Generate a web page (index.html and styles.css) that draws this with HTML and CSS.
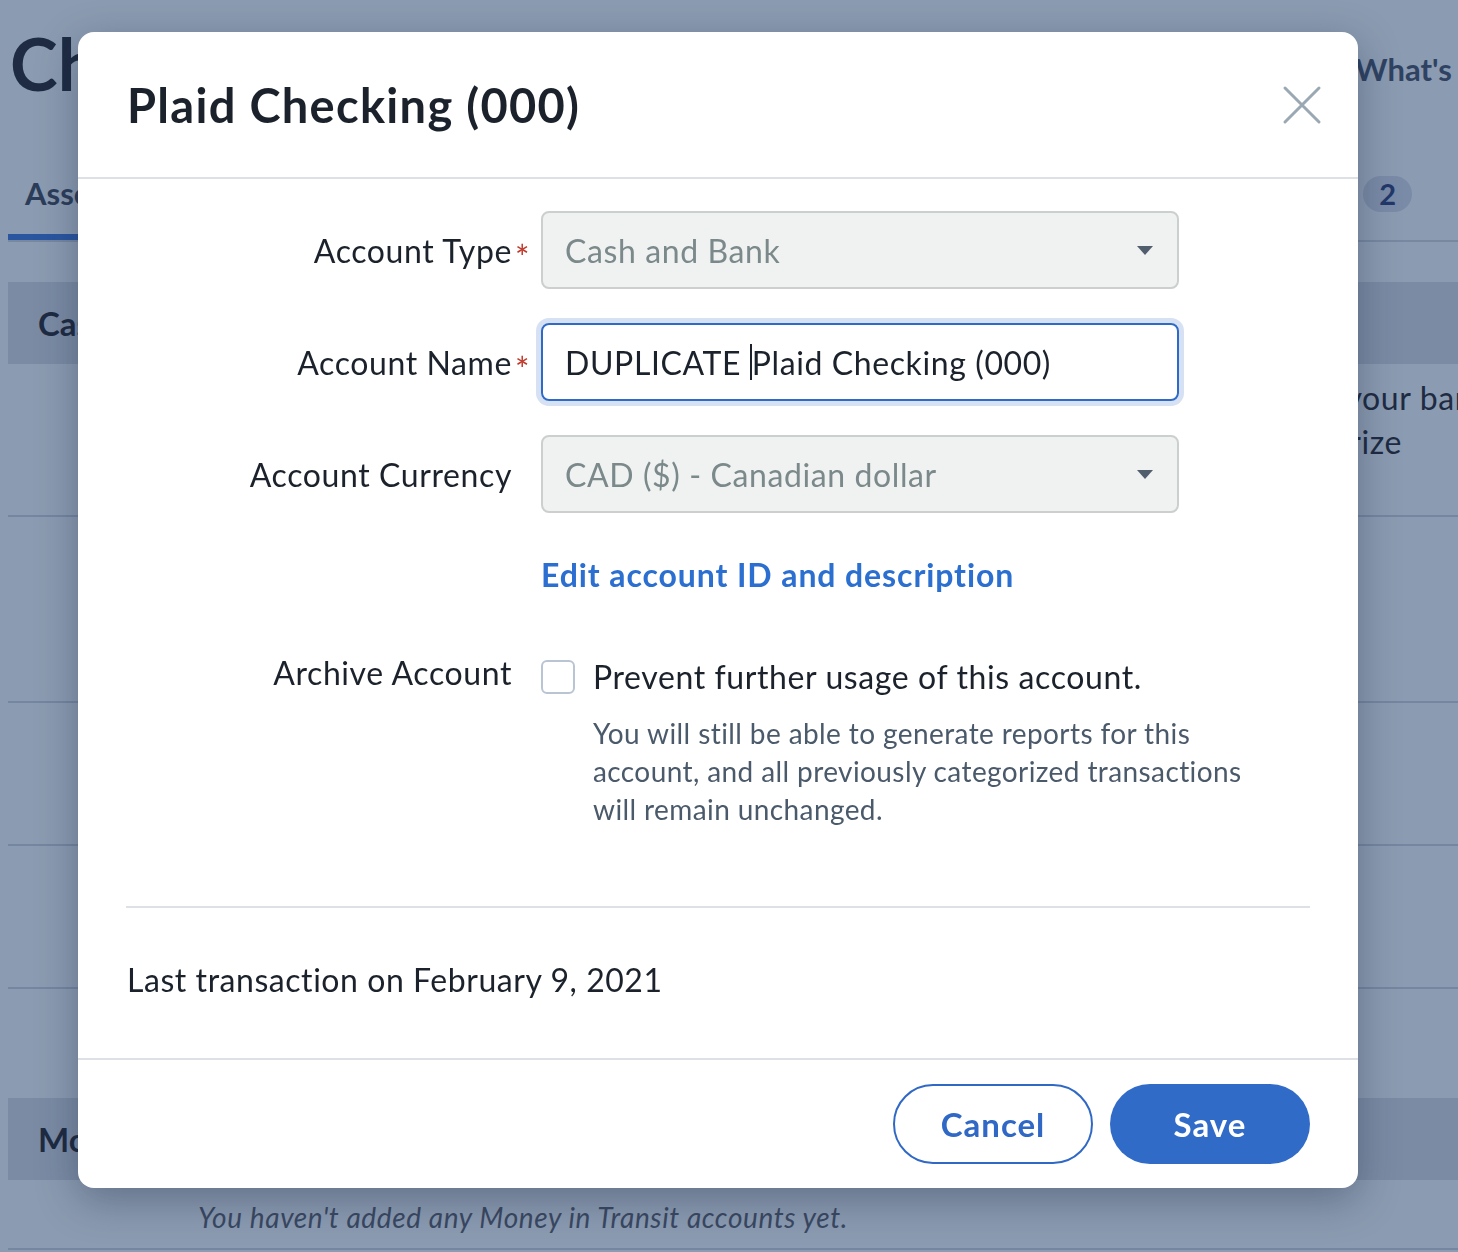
FILE: index.html
```html
<!doctype html>
<html lang="en">
  <head>
    <meta charset="UTF-8" />
    <meta name="viewport" content="width=device-width, initial-scale=1.0" />
    <title>Chart of Accounts</title>
    <link rel="stylesheet" href="styles.css">
  </head>
  <body>
    <div class="page">
      <div class="page-top">
        <h1>Chart of Accounts</h1>
        <div class="whats-new">
          <svg width="30" height="30" viewBox="0 0 30 30"><rect x="4" y="8" width="22" height="16" rx="3" fill="none" stroke="#3d4f6c" stroke-width="2.5"/></svg>
          What's new
        </div>
      </div>

      <div class="tabs">
        <div class="tab active">Assets <span class="count">5</span></div>
        <div class="tab">Liabilities &amp; Credit Cards <span class="count">3</span></div>
        <div class="tab">Income <span class="count">4</span></div>
        <div class="tab">Expenses <span class="count">26</span></div>
        <div class="tab">Equity <span class="count">2</span></div>
      </div>

      <div class="band">Cash and Bank</div>
      <div class="row tall">
        <div class="hint">
          <span class="hint-first">Connect with Plaid to import transactions from your bank</span>
          <span>automatically, and let us help you categorize</span>
        </div>
      </div>
      <div class="row taller"></div>
      <div class="row"></div>
      <div class="row"></div>
      <div class="row short"></div>
      <div class="band">Money in Transit</div>
      <div class="empty">You haven't added any Money in Transit accounts yet.</div>
    </div>

    <div class="overlay">
      <div class="modal">
        <div class="modal-header">
          <h2>Plaid Checking (000)</h2>
          <button class="close" aria-label="Close">
            <svg width="40" height="40" viewBox="0 0 40 40">
              <path d="M3 3 L37 37 M37 3 L3 37" stroke="#9aa8b3" stroke-width="3" stroke-linecap="round"/>
            </svg>
          </button>
        </div>

        <div class="modal-body">
          <div class="field">
            <label><span class="req">Account Type</span></label>
            <div class="select">
              <span>Cash and Bank</span>
              <span class="arrow"></span>
            </div>
          </div>

          <div class="field">
            <label><span class="req">Account Name</span></label>
            <div class="text-input">DUPLICATE <span class="caret"></span>Plaid Checking (000)</div>
          </div>

          <div class="field">
            <label>Account Currency</label>
            <div class="select">
              <span>CAD ($) - Canadian dollar</span>
              <span class="arrow"></span>
            </div>
          </div>

          <div class="field link-row">
            <span></span>
            <a href="#" class="edit-link">Edit account ID and description</a>
          </div>

          <div class="field archive">
            <label>Archive Account</label>
            <div class="archive-box">
              <div class="check-line">
                <span class="checkbox"></span>
                <span>Prevent further usage of this account.</span>
              </div>
              <p class="note">You will still be able to generate reports for this account, and all previously categorized transactions will remain unchanged.</p>
            </div>
          </div>

          <hr class="divider">

          <p class="last-tx">Last transaction on February 9, 2021</p>
        </div>

        <div class="modal-footer">
          <button class="btn btn-outline">Cancel</button>
          <button class="btn btn-primary">Save</button>
        </div>
      </div>
    </div>
  </body>
</html>
```

FILE: styles.css
```css
body {
  margin: 0;
  font-family: Lato, "Noto Sans", sans-serif;
  background-color: #8b9bb1;
  color: #1e2b42;
  overflow: hidden;
}

.page {
  padding: 0 0 0 8px;
  overflow: hidden;
}

.page-top {
  display: flex;
  justify-content: space-between;
  align-items: center;
  height: 126px;
}

.page-top h1 {
  margin: 0 0 0 2px;
  font-size: 72px;
  font-weight: 700;
  color: #1e2b42;
  white-space: nowrap;
}

.whats-new {
  display: flex;
  align-items: center;
  gap: 20px;
  font-size: 31px;
  font-weight: 700;
  color: #2f4262;
  margin-right: -60px;
  margin-top: 12px;
  white-space: nowrap;
}

.tabs {
  display: flex;
  gap: 20px;
  border-bottom: 2px solid #7788a1;
  height: 116px;
  box-sizing: border-box;
  margin-bottom: 40px;
  overflow: hidden;
}

.tab {
  display: flex;
  align-items: center;
  gap: 14px;
  padding: 22px 17px 0;
  font-size: 31px;
  font-weight: 700;
  color: #2c3d5a;
  height: 114px;
  box-sizing: border-box;
  white-space: nowrap;
  flex-shrink: 0;
}

.tab.active {
  border-bottom: 6px solid #2a56a0;
  width: 192px;
  padding-top: 26px;
}

.tab:last-child {
  margin-left: auto;
  margin-right: 46px;
  padding-right: 0;
}

.count {
  background-color: #7a8ba7;
  color: #22386a;
  border-radius: 18px;
  padding: 2px 16px;
  font-size: 29px;
  line-height: 32px;
}

.band {
  background-color: #7b8ba4;
  height: 82px;
  display: flex;
  align-items: center;
  padding-left: 30px;
  font-size: 33px;
  font-weight: 700;
  color: #1e2b42;
}

.row {
  height: 141px;
  border-bottom: 2px solid #7586a0;
}

.row.tall {
  height: 151px;
  position: relative;
}

.row.taller {
  height: 184px;
}

.row.short {
  height: 109px;
  border-bottom: none;
}

.hint {
  position: absolute;
  right: 56px;
  top: 12px;
  display: flex;
  flex-direction: column;
  align-items: flex-end;
  font-size: 32px;
  line-height: 44px;
  letter-spacing: 0.6px;
  color: #1e2b42;
  white-space: nowrap;
}

.hint-first {
  margin-right: -88px;
}

.empty {
  padding: 20px 0 14px 190px;
  font-size: 28px;
  font-style: italic;
  letter-spacing: 0.6px;
  color: #3a4862;
  border-bottom: 2px solid #7586a0;
}

/* modal */

.overlay {
  position: fixed;
  inset: 0;
  padding: 32px 0 0 78px;
}

.modal {
  width: 1280px;
  height: 1156px;
  background-color: white;
  border-radius: 16px;
  box-shadow: 0 12px 40px rgba(20, 35, 60, 0.35);
  display: flex;
  flex-direction: column;
  color: #1b222b;
}

.modal-header {
  height: 145px;
  border-bottom: 2px solid #dde1e5;
  display: flex;
  align-items: center;
  justify-content: space-between;
  padding: 0 36px 0 49px;
}

.modal-header h2 {
  margin: 0;
  font-size: 47px;
  font-weight: 700;
  letter-spacing: 1.3px;
  color: #1b222b;
}

.close {
  background: none;
  border: none;
  padding: 0;
  width: 40px;
  height: 40px;
  cursor: pointer;
}

.modal-body {
  flex: 1;
  padding: 32px 48px 0 0;
}

.field {
  display: grid;
  grid-template-columns: 434px 638px;
  column-gap: 29px;
  align-items: center;
  margin-bottom: 34px;
  font-size: 32px;
  letter-spacing: 0.6px;
}

.field label {
  text-align: right;
  color: #1b222b;
}

.req {
  position: relative;
}

.req::after {
  content: "*";
  position: absolute;
  left: 100%;
  top: 5px;
  margin-left: 3px;
  font-size: 34px;
  color: #c0392b;
}

.select {
  height: 78px;
  box-sizing: border-box;
  border: 2px solid #cbcfce;
  border-radius: 8px;
  background-color: #f0f2f1;
  display: flex;
  align-items: center;
  justify-content: space-between;
  padding: 0 24px 0 22px;
  color: #7b898b;
}

.arrow {
  width: 0;
  height: 0;
  border-left: 8px solid transparent;
  border-right: 8px solid transparent;
  border-top: 9px solid #515e6e;
}

.text-input {
  height: 78px;
  box-sizing: border-box;
  border: 2px solid #2f6bc6;
  border-radius: 8px;
  box-shadow: 0 0 0 5px #d6e1f4;
  display: flex;
  align-items: center;
  padding: 0 22px;
  white-space: pre;
  color: #1b222b;
}

.caret {
  display: inline-block;
  width: 2px;
  height: 36px;
  background-color: #1b222b;
}

.link-row {
  margin-top: 41px;
  margin-bottom: 0;
  height: 40px;
}

.edit-link {
  color: #2b6fd0;
  font-weight: 700;
  letter-spacing: 0.9px;
  text-decoration: none;
}

.archive {
  align-items: start;
  margin-top: 63px;
  margin-bottom: 0;
}

.archive label {
  line-height: 40px;
  margin-top: -4px;
}

.check-line {
  display: flex;
  align-items: center;
  gap: 18px;
  line-height: 40px;
}

.checkbox {
  width: 34px;
  height: 34px;
  box-sizing: border-box;
  border: 2px solid #b9c5d2;
  border-radius: 6px;
  flex-shrink: 0;
}

.note {
  margin: 17px 0 0 52px;
  font-size: 28px;
  line-height: 38px;
  letter-spacing: 0.4px;
  color: #4b5a6b;
  width: 690px;
}

.divider {
  border: none;
  border-top: 2px solid #dde1e5;
  margin: 78px 0 0 48px;
}

.last-tx {
  margin: 52px 0 0 49px;
  font-size: 32px;
  line-height: 40px;
  letter-spacing: 0.55px;
}

.modal-footer {
  border-top: 2px solid #dde1e5;
  display: flex;
  justify-content: flex-end;
  gap: 17px;
  padding: 24px 48px 24px 0;
}

.btn {
  width: 200px;
  height: 80px;
  border-radius: 40px;
  font-family: inherit;
  font-size: 33px;
  font-weight: 700;
  letter-spacing: 1px;
  cursor: pointer;
}

.btn-outline {
  background-color: white;
  border: 2px solid #3068c5;
  color: #3068c5;
}

.btn-primary {
  background-color: #316bc8;
  border: none;
  color: white;
}
```
